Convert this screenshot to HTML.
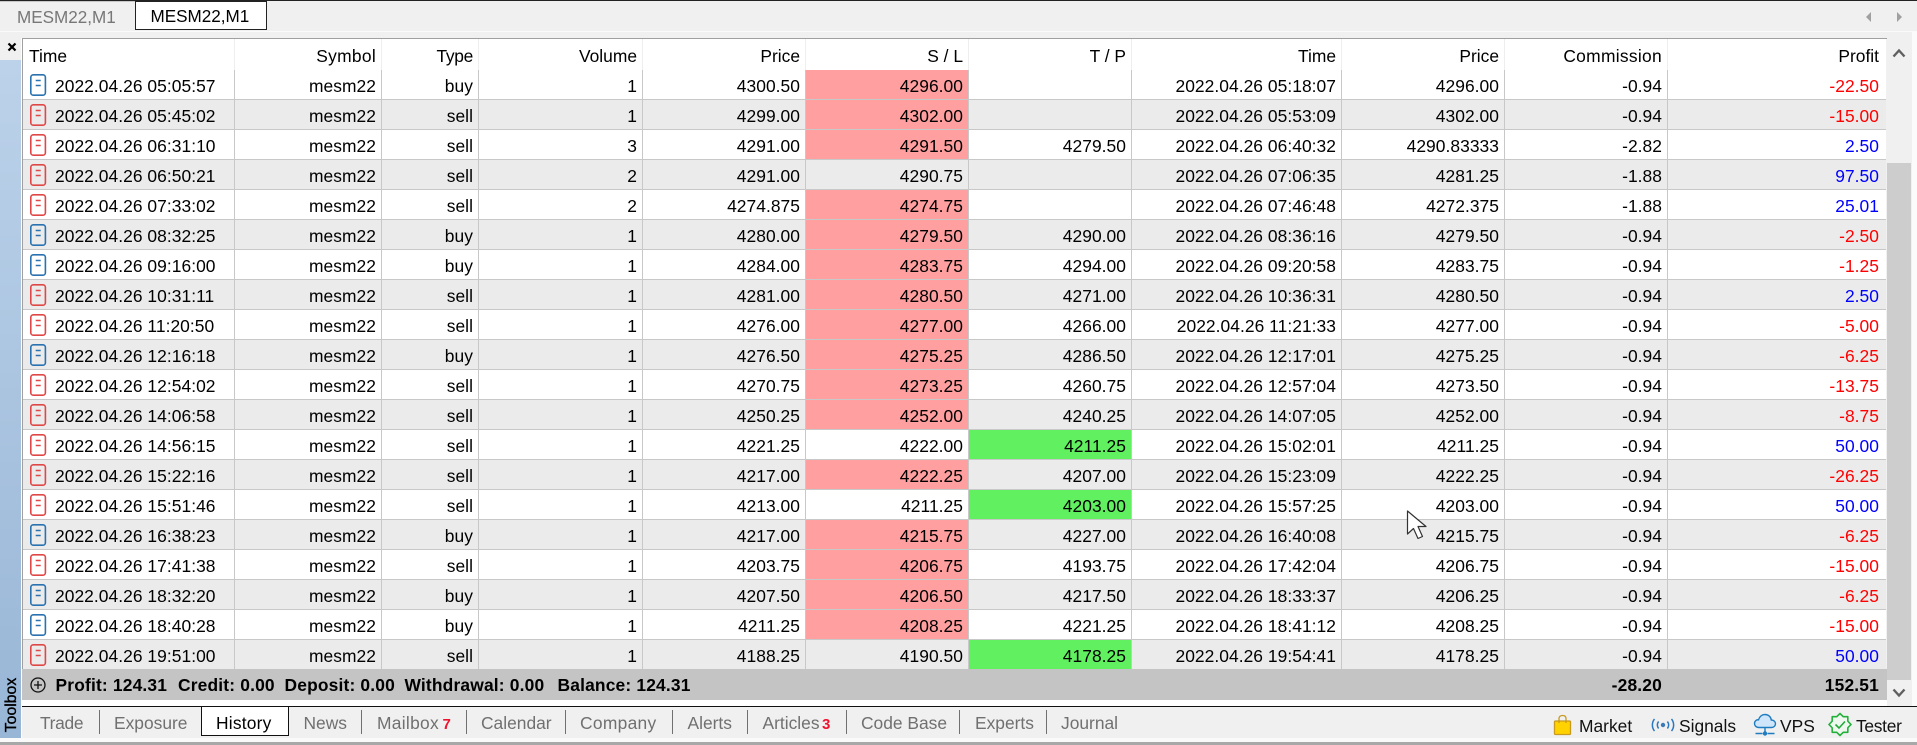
<!DOCTYPE html>
<html><head><meta charset="utf-8"><style>
html,body{margin:0;padding:0;width:1917px;height:745px;overflow:hidden;background:#f0f0f0;font-family:"Liberation Sans",sans-serif;font-size:17.4px;color:#000}
.a{position:absolute;white-space:nowrap}
table{position:absolute;left:23px;top:39px;width:1863px;table-layout:fixed;border-collapse:separate;border-spacing:0;background:#fff}
td,th{box-sizing:border-box;height:30px;padding:3px 5px 0 0;line-height:26px;text-align:right;font-weight:normal;border-right:1px solid #c8c8c8;border-bottom:1px solid #c8c8c8;white-space:nowrap;overflow:hidden;position:relative}
td{letter-spacing:.05px}
th{height:31px;line-height:28px;border-bottom:0;border-right:1px solid #eee;background:#fff}
td:last-child,th:last-child{border-right:0;padding-right:7px}
td:first-child{text-align:left;padding-left:32px}
th:first-child{text-align:left;padding-left:6px}
tr:nth-child(even) td{background:#ebebeb}
tr:nth-child(odd) td{background:#fff}
tr:nth-child(n) td.s{background:#ff9f9f}
tr:nth-child(n) td.g{background:#60f060}
td.m{color:#f00}td.p{color:#00f}
td svg{position:absolute;left:7px;top:4px}
.tab{position:absolute;top:711px;color:#707070;font-size:17.4px;line-height:24px;white-space:nowrap}
.sep{position:absolute;top:710px;width:1px;height:24px;background:#707070}
.b{font-weight:bold}
.sum{position:absolute;top:673px;font-weight:bold;line-height:24px;white-space:nowrap;letter-spacing:.17px}
</style></head><body>
<svg width="0" height="0" style="position:absolute"><defs>
<g id="bi"><rect x=".8" y=".8" width="14.600" height="20.400" rx="2.500" fill="none" stroke="#2a72b0" stroke-width="1.600"/><path d="M5.700 6.500h5M5.700 11.500h5" stroke="#2a72b0" stroke-width="1.600"/></g>
<g id="ri"><rect x=".8" y=".8" width="14.600" height="20.400" rx="2.500" fill="none" stroke="#e04848" stroke-width="1.600"/><path d="M5.700 6.500h5M5.700 11.500h5" stroke="#e04848" stroke-width="1.600"/></g>
</defs></svg>

<!-- top tab bar -->
<div class="a" style="left:0;top:0;width:1917px;height:1px;background:#222"></div>
<div class="a" style="left:0;top:1px;width:135px;height:1px;background:#c8c8c8"></div>
<div class="a" style="left:0;top:31px;width:1917px;height:1px;background:#fafafa"></div>
<div class="a" style="left:17px;top:6px;color:#777;line-height:24px;font-size:17.1px">MESM22,M1</div>
<div class="a" style="left:135px;top:1px;width:130px;height:27px;background:#fff;border:1px solid #222;border-top:1px solid #222"></div>
<div class="a" style="left:150.500px;top:5px;line-height:24px;font-size:17.1px">MESM22,M1</div>
<svg class="a" style="left:1862px;top:10px" width="44" height="14"><path d="M9 2L4 7l5 5z" fill="#a0a0a0"/><path d="M35 2l5 5-5 5z" fill="#a0a0a0"/></svg>

<!-- left strip -->
<div class="a" style="left:0;top:60px;width:21px;height:678px;background:linear-gradient(#bcd2ea,#98b6d6)"></div>
<div class="a" style="left:21px;top:38px;width:1px;height:700px;background:#fff"></div>
<svg class="a" style="left:6px;top:41px" width="12" height="12"><path d="M2.500 2.500l7 7M9.500 2.500l-7 7" stroke="#000" stroke-width="2.200"/></svg>
<div class="a" style="left:-16px;top:694px;width:56px;height:22px;line-height:22px;transform:rotate(-90deg);font-size:15.800px;-webkit-text-stroke:.35px #000;text-align:center">Toolbox</div>

<!-- table frame -->
<div class="a" style="left:22px;top:38px;width:1865px;height:1px;background:#a0a0a0"></div>
<div class="a" style="left:22px;top:38px;width:1px;height:632px;background:#a0a0a0"></div>

<table>
<colgroup><col style="width:212px"><col style="width:147px"><col style="width:97px"><col style="width:164px"><col style="width:163px"><col style="width:163px"><col style="width:163px"><col style="width:210px"><col style="width:163px"><col style="width:163px"><col style="width:218px"></colgroup>
<thead><tr style="background:#fff"><th>Time</th><th style="letter-spacing:.3px">Symbol</th><th style="letter-spacing:-.3px">Type</th><th>Volume</th><th>Price</th><th>S / L</th><th>T / P</th><th>Time</th><th>Price</th><th style="letter-spacing:.3px">Commission</th><th>Profit</th></tr></thead>
<tbody>
<tr><td><svg width="17" height="23"><use href="#bi"/></svg>2022.04.26 05:05:57</td><td>mesm22</td><td>buy</td><td>1</td><td>4300.50</td><td class="s">4296.00</td><td></td><td>2022.04.26 05:18:07</td><td>4296.00</td><td>-0.94</td><td class="m">-22.50</td></tr>
<tr><td><svg width="17" height="23"><use href="#ri"/></svg>2022.04.26 05:45:02</td><td>mesm22</td><td>sell</td><td>1</td><td>4299.00</td><td class="s">4302.00</td><td></td><td>2022.04.26 05:53:09</td><td>4302.00</td><td>-0.94</td><td class="m">-15.00</td></tr>
<tr><td><svg width="17" height="23"><use href="#ri"/></svg>2022.04.26 06:31:10</td><td>mesm22</td><td>sell</td><td>3</td><td>4291.00</td><td class="s">4291.50</td><td>4279.50</td><td>2022.04.26 06:40:32</td><td>4290.83333</td><td>-2.82</td><td class="p">2.50</td></tr>
<tr><td><svg width="17" height="23"><use href="#ri"/></svg>2022.04.26 06:50:21</td><td>mesm22</td><td>sell</td><td>2</td><td>4291.00</td><td>4290.75</td><td></td><td>2022.04.26 07:06:35</td><td>4281.25</td><td>-1.88</td><td class="p">97.50</td></tr>
<tr><td><svg width="17" height="23"><use href="#ri"/></svg>2022.04.26 07:33:02</td><td>mesm22</td><td>sell</td><td>2</td><td>4274.875</td><td class="s">4274.75</td><td></td><td>2022.04.26 07:46:48</td><td>4272.375</td><td>-1.88</td><td class="p">25.01</td></tr>
<tr><td><svg width="17" height="23"><use href="#bi"/></svg>2022.04.26 08:32:25</td><td>mesm22</td><td>buy</td><td>1</td><td>4280.00</td><td class="s">4279.50</td><td>4290.00</td><td>2022.04.26 08:36:16</td><td>4279.50</td><td>-0.94</td><td class="m">-2.50</td></tr>
<tr><td><svg width="17" height="23"><use href="#bi"/></svg>2022.04.26 09:16:00</td><td>mesm22</td><td>buy</td><td>1</td><td>4284.00</td><td class="s">4283.75</td><td>4294.00</td><td>2022.04.26 09:20:58</td><td>4283.75</td><td>-0.94</td><td class="m">-1.25</td></tr>
<tr><td><svg width="17" height="23"><use href="#ri"/></svg>2022.04.26 10:31:11</td><td>mesm22</td><td>sell</td><td>1</td><td>4281.00</td><td class="s">4280.50</td><td>4271.00</td><td>2022.04.26 10:36:31</td><td>4280.50</td><td>-0.94</td><td class="p">2.50</td></tr>
<tr><td><svg width="17" height="23"><use href="#ri"/></svg>2022.04.26 11:20:50</td><td>mesm22</td><td>sell</td><td>1</td><td>4276.00</td><td class="s">4277.00</td><td>4266.00</td><td>2022.04.26 11:21:33</td><td>4277.00</td><td>-0.94</td><td class="m">-5.00</td></tr>
<tr><td><svg width="17" height="23"><use href="#bi"/></svg>2022.04.26 12:16:18</td><td>mesm22</td><td>buy</td><td>1</td><td>4276.50</td><td class="s">4275.25</td><td>4286.50</td><td>2022.04.26 12:17:01</td><td>4275.25</td><td>-0.94</td><td class="m">-6.25</td></tr>
<tr><td><svg width="17" height="23"><use href="#ri"/></svg>2022.04.26 12:54:02</td><td>mesm22</td><td>sell</td><td>1</td><td>4270.75</td><td class="s">4273.25</td><td>4260.75</td><td>2022.04.26 12:57:04</td><td>4273.50</td><td>-0.94</td><td class="m">-13.75</td></tr>
<tr><td><svg width="17" height="23"><use href="#ri"/></svg>2022.04.26 14:06:58</td><td>mesm22</td><td>sell</td><td>1</td><td>4250.25</td><td class="s">4252.00</td><td>4240.25</td><td>2022.04.26 14:07:05</td><td>4252.00</td><td>-0.94</td><td class="m">-8.75</td></tr>
<tr><td><svg width="17" height="23"><use href="#ri"/></svg>2022.04.26 14:56:15</td><td>mesm22</td><td>sell</td><td>1</td><td>4221.25</td><td>4222.00</td><td class="g">4211.25</td><td>2022.04.26 15:02:01</td><td>4211.25</td><td>-0.94</td><td class="p">50.00</td></tr>
<tr><td><svg width="17" height="23"><use href="#ri"/></svg>2022.04.26 15:22:16</td><td>mesm22</td><td>sell</td><td>1</td><td>4217.00</td><td class="s">4222.25</td><td>4207.00</td><td>2022.04.26 15:23:09</td><td>4222.25</td><td>-0.94</td><td class="m">-26.25</td></tr>
<tr><td><svg width="17" height="23"><use href="#ri"/></svg>2022.04.26 15:51:46</td><td>mesm22</td><td>sell</td><td>1</td><td>4213.00</td><td>4211.25</td><td class="g">4203.00</td><td>2022.04.26 15:57:25</td><td>4203.00</td><td>-0.94</td><td class="p">50.00</td></tr>
<tr><td><svg width="17" height="23"><use href="#bi"/></svg>2022.04.26 16:38:23</td><td>mesm22</td><td>buy</td><td>1</td><td>4217.00</td><td class="s">4215.75</td><td>4227.00</td><td>2022.04.26 16:40:08</td><td>4215.75</td><td>-0.94</td><td class="m">-6.25</td></tr>
<tr><td><svg width="17" height="23"><use href="#ri"/></svg>2022.04.26 17:41:38</td><td>mesm22</td><td>sell</td><td>1</td><td>4203.75</td><td class="s">4206.75</td><td>4193.75</td><td>2022.04.26 17:42:04</td><td>4206.75</td><td>-0.94</td><td class="m">-15.00</td></tr>
<tr><td><svg width="17" height="23"><use href="#bi"/></svg>2022.04.26 18:32:20</td><td>mesm22</td><td>buy</td><td>1</td><td>4207.50</td><td class="s">4206.50</td><td>4217.50</td><td>2022.04.26 18:33:37</td><td>4206.25</td><td>-0.94</td><td class="m">-6.25</td></tr>
<tr><td><svg width="17" height="23"><use href="#bi"/></svg>2022.04.26 18:40:28</td><td>mesm22</td><td>buy</td><td>1</td><td>4211.25</td><td class="s">4208.25</td><td>4221.25</td><td>2022.04.26 18:41:12</td><td>4208.25</td><td>-0.94</td><td class="m">-15.00</td></tr>
<tr><td><svg width="17" height="23"><use href="#ri"/></svg>2022.04.26 19:51:00</td><td>mesm22</td><td>sell</td><td>1</td><td>4188.25</td><td>4190.50</td><td class="g">4178.25</td><td>2022.04.26 19:54:41</td><td>4178.25</td><td>-0.94</td><td class="p">50.00</td></tr>
</tbody></table>

<!-- summary -->
<div class="a" style="left:22px;top:669px;width:1865px;height:31px;background:#c4c4c4"></div>
<svg class="a" style="left:29px;top:676px" width="18" height="18"><circle cx="9" cy="9" r="7" fill="none" stroke="#111" stroke-width="1.300"/><path d="M5 9h8M9 5v8" stroke="#111" stroke-width="1.300"/></svg>
<div class="sum" style="left:55.500px">Profit: 124.31</div>
<div class="sum" style="left:178px">Credit: 0.00</div>
<div class="sum" style="left:284.500px">Deposit: 0.00</div>
<div class="sum" style="left:404.500px">Withdrawal: 0.00</div>
<div class="sum" style="left:557.500px">Balance: 124.31</div>
<div class="sum" style="right:255px">-28.20</div>
<div class="sum" style="right:38px">152.51</div>

<!-- white gap -->
<div class="a" style="left:22px;top:700px;width:1865px;height:6px;background:#fff"></div>

<!-- scrollbar -->
<div class="a" style="left:1887px;top:39px;width:25px;height:667px;background:#f0f0f0"></div>
<div class="a" style="left:1912px;top:32px;width:5px;height:674px;background:#fbfbfb"></div>
<div class="a" style="left:1887px;top:163px;width:24px;height:517px;background:#cdcdcd"></div>
<svg class="a" style="left:1892px;top:47px" width="14" height="12"><path d="M1.500 9.500L7 3.500l5.500 6" fill="none" stroke="#606060" stroke-width="2.400"/></svg>
<svg class="a" style="left:1892px;top:687px" width="14" height="12"><path d="M1.500 2.500L7 8.500l5.500-6" fill="none" stroke="#606060" stroke-width="2.400"/></svg>

<!-- bottom bar -->
<div class="a" style="left:22px;top:706px;width:1895px;height:1px;background:#111"></div>
<div class="a" style="left:0;top:738px;width:1917px;height:4px;background:#fafafa"></div>
<div class="a" style="left:0;top:742px;width:1917px;height:3px;background:#a8a8a8"></div>

<div class="a" style="left:201px;top:706px;width:86px;height:28px;background:#fff;border:1px solid #111"></div>
<div class="tab" style="left:40px;letter-spacing:-.3px">Trade</div>
<div class="sep" style="left:99px"></div>
<div class="tab" style="left:114px">Exposure</div>
<div class="tab" style="left:216px;color:#000;letter-spacing:.2px">History</div>
<div class="tab" style="left:303.500px">News</div>
<div class="sep" style="left:361px"></div>
<div class="tab" style="left:377px;letter-spacing:.3px">Mailbox</div>
<div class="a b" style="left:442.500px;top:713px;color:#f0132e;font-size:15px;line-height:24px">7</div>
<div class="sep" style="left:466px"></div>
<div class="tab" style="left:481px">Calendar</div>
<div class="sep" style="left:565px"></div>
<div class="tab" style="left:580px;letter-spacing:.3px">Company</div>
<div class="sep" style="left:672px"></div>
<div class="tab" style="left:687.500px">Alerts</div>
<div class="sep" style="left:747px"></div>
<div class="tab" style="left:762.500px">Articles</div>
<div class="a b" style="left:822px;top:713px;color:#f0132e;font-size:15px;line-height:24px">3</div>
<div class="sep" style="left:846px"></div>
<div class="tab" style="left:861px">Code Base</div>
<div class="sep" style="left:959px"></div>
<div class="tab" style="left:975px">Experts</div>
<div class="sep" style="left:1046px"></div>
<div class="tab" style="left:1061px">Journal</div>

<!-- right buttons -->
<svg class="a" style="left:1553px;top:714px" width="20" height="22"><rect x="1.500" y="7" width="16" height="13.500" rx="1" fill="#ffd200" stroke="#c89a20" stroke-width="1.300"/><path d="M6 9V4.500C6 2.500 7.500 1.500 9.500 1.500S13 2.500 13 4.500V9" fill="none" stroke="#c89a20" stroke-width="1.300"/></svg>
<div class="tab" style="left:1579px;top:714px;color:#111">Market</div>
<svg class="a" style="left:1650px;top:717px" width="26" height="16"><circle cx="13" cy="8" r="2.200" fill="#3a7ab8"/><path d="M8.600 4.500a5.500 5.500 0 0 0 0 7M17.400 4.500a5.500 5.500 0 0 1 0 7M4.500 2a9.500 9.500 0 0 0 0 12M21.500 2a9.500 9.500 0 0 1 0 12" fill="none" stroke="#2a78c0" stroke-width="1.500"/></svg>
<div class="tab" style="left:1679px;top:714px;color:#111">Signals</div>
<svg class="a" style="left:1753px;top:713px" width="24" height="25"><path d="M6 14.500C2.500 14.500 1.500 12 1.500 10.500C1.500 8 3.500 6.500 5.500 6.800C6.500 3.500 9 1.500 12 1.500C15.500 1.500 18 4 18.300 7C20.800 7 22.500 8.800 22.500 10.800C22.500 13 20.500 14.500 18.500 14.500Z" fill="#cfe6fa" stroke="#1f7cc0" stroke-width="1.400"/><path d="M12 14.500v6M2.500 20.500h7M14.500 20.500h7" stroke="#1f7cc0" stroke-width="1.400"/><circle cx="12" cy="20.500" r="2.200" fill="#1f7cc0"/></svg>
<div class="tab" style="left:1780px;top:714px;color:#111">VPS</div>
<svg class="a" style="left:1828px;top:712px" width="24" height="25"><path d="M23 12.500L19.850 15.750 19.800 20.300 15.250 20.350 12 23.500 8.750 20.350 4.200 20.300 4.150 15.750 1 12.500 4.150 9.250 4.200 4.700 8.750 4.650 12 1.500 15.250 4.650 19.800 4.700 19.850 9.250Z" fill="#eef8ee" stroke="#22b03a" stroke-width="1.600" stroke-linejoin="round"/><path d="M7.500 12.500l3.500 3.500 6-6.500" fill="none" stroke="#22a83a" stroke-width="1.600"/></svg>
<div class="tab" style="left:1856px;top:714px;color:#111;letter-spacing:-.3px">Tester</div>

<!-- mouse cursor -->
<svg class="a" style="left:1405px;top:509px" width="24" height="32"><path d="M2.500 2v23l6-5.500 4.500 10 4.500-2-4.500-10h8z" fill="#fff" stroke="#333" stroke-width="1.200" stroke-linejoin="round"/></svg>
</body></html>
